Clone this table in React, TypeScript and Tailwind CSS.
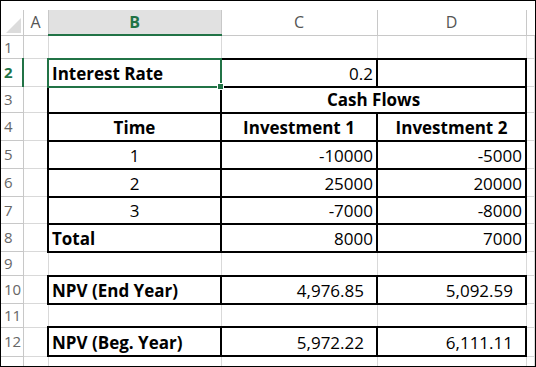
import React from 'react'

const grid = 'border border-[#d9d9d9]'
const box = 'border-2 border-black'
const rowHead = 'border border-[#c8c8c8] border-l-0 text-left align-middle pl-[3px] text-[15px] font-normal text-[#666]'

type Cell = { text?: string; cls?: string; span?: number }

const rows: { h: string; cells: Cell[] }[] = [
  { h: 'h-[22px]', cells: [{}, {}, {}] },
  {
    h: 'h-[28px]',
    cells: [
      { text: 'Interest Rate', cls: 'sel font-bold text-left' },
      { text: '0.2', cls: `${box} text-right` },
      { text: '', cls: box },
    ],
  },
  {
    h: 'h-[26px]',
    cells: [
      { text: '', cls: box },
      { text: 'Cash Flows', cls: `${box} font-bold text-center`, span: 2 },
    ],
  },
  {
    h: 'h-[28px]',
    cells: [
      { text: 'Time', cls: `${box} font-bold text-center` },
      { text: 'Investment 1', cls: `${box} font-bold text-center` },
      { text: 'Investment 2', cls: `${box} font-bold text-center` },
    ],
  },
  {
    h: 'h-[28px]',
    cells: [
      { text: '1', cls: `${box} text-center` },
      { text: '-10000', cls: `${box} text-right` },
      { text: '-5000', cls: `${box} text-right` },
    ],
  },
  {
    h: 'h-[28px]',
    cells: [
      { text: '2', cls: `${box} text-center` },
      { text: '25000', cls: `${box} text-right` },
      { text: '20000', cls: `${box} text-right` },
    ],
  },
  {
    h: 'h-[27px]',
    cells: [
      { text: '3', cls: `${box} text-center` },
      { text: '-7000', cls: `${box} text-right` },
      { text: '-8000', cls: `${box} text-right` },
    ],
  },
  {
    h: 'h-[28px]',
    cells: [
      { text: 'Total', cls: `${box} font-bold text-left` },
      { text: '8000', cls: `${box} text-right` },
      { text: '7000', cls: `${box} text-right` },
    ],
  },
  { h: 'h-[24px]', cells: [{}, {}, {}] },
  {
    h: 'h-[28px]',
    cells: [
      { text: 'NPV (End Year)', cls: `${box} font-bold text-left` },
      { text: '4,976.85', cls: `${box} text-right pr-[12px]` },
      { text: '5,092.59', cls: `${box} text-right pr-[12px]` },
    ],
  },
  { h: 'h-[22px]', cells: [{}, {}, {}] },
  {
    h: 'h-[29px]',
    cells: [
      { text: 'NPV (Beg. Year)', cls: `${box} font-bold text-left` },
      { text: '5,972.22', cls: `${box} text-right pr-[12px]` },
      { text: '6,111.11', cls: `${box} text-right pr-[12px]` },
    ],
  },
  { h: 'h-[29px]', cells: [{}, {}, {}] },
]

export default function App() {
  return (
    <div className="w-[536px] h-[367px] overflow-hidden border border-black bg-white font-['Open_Sans',sans-serif] text-[17px] text-black">
      <div className="h-[9px]" />
      <table className="table-fixed border-collapse w-[534px]">
        <colgroup>
          <col className="w-[22px]" />
          <col className="w-[25px]" />
          <col className="w-[173px]" />
          <col className="w-[156px]" />
          <col className="w-[149px]" />
          <col />
        </colgroup>
        <thead>
          <tr className="h-[24px]">
            <th className="border-r border-b border-[#c8c8c8] relative p-0">
              <svg className="absolute right-[2px] bottom-[2px]" width="15" height="15" viewBox="0 0 15 15">
                <polygon points="15,0 15,15 0,15" fill="#dcdcdc" />
              </svg>
            </th>
            <th className="border-r border-b border-[#c8c8c8] font-normal text-[16px] text-[#555] text-center">A</th>
            <th className="border-r border-[#c8c8c8] border-b-2 border-b-[#217346] bg-[#e1e1e1] font-bold text-[16px] text-[#217346] text-center">
              B
            </th>
            <th className="border-r border-b border-[#c8c8c8] font-normal text-[16px] text-[#555] text-center">C</th>
            <th className="border-r border-b border-[#c8c8c8] font-normal text-[16px] text-[#555] text-center">D</th>
            <th className="border-b border-[#c8c8c8]" />
          </tr>
        </thead>
        <tbody>
          {rows.map((r, i) => {
            const n = i + 1
            const active = n === 2
            return (
              <tr key={n} className={r.h}>
                <td
                  className={
                    active
                      ? 'border border-[#c8c8c8] border-l-0 border-r-2 border-r-[#217346] text-left align-middle pl-[3px] text-[15px] font-bold text-[#217346]'
                      : rowHead
                  }
                >
                  {n}
                </td>
                <td className={grid} />
                {r.cells.map((c, j) => {
                  if (c.cls === undefined) return <td key={j} className={grid} />
                  if (c.cls.startsWith('sel')) {
                    return (
                      <td
                        key={j}
                        className="relative border-2 border-[#217346] text-left font-bold align-bottom pl-[3px] pb-[2px] leading-[20px]"
                      >
                        {c.text}
                        <span className="absolute -right-[4px] -bottom-[4px] w-[7px] h-[7px] bg-[#217346] border border-white" />
                      </td>
                    )
                  }
                  return (
                    <td
                      key={j}
                      colSpan={c.span}
                      className={`${c.cls} align-bottom px-[3px] pb-[2px] leading-[20px] whitespace-nowrap`}
                    >
                      {c.text}
                    </td>
                  )
                })}
                <td className={grid} />
              </tr>
            )
          })}
        </tbody>
      </table>
    </div>
  )
}
